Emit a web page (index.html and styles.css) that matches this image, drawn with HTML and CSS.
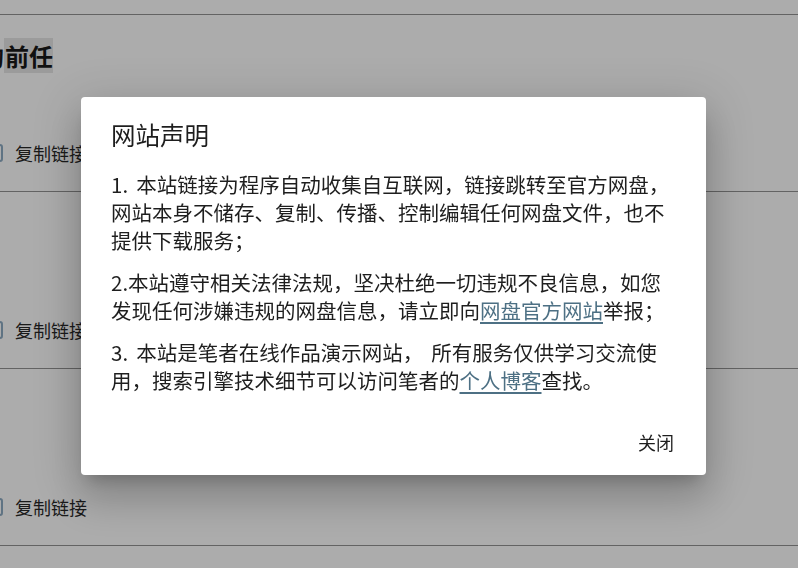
FILE: index.html
```html
<!DOCTYPE html>
<html lang="zh-CN">
<head>
<meta charset="utf-8">
<title>网站声明</title>
<link rel="stylesheet" href="styles.css">
</head>
<body>
<main class="list">
  <section class="row">
    <h2 class="row-title">的<span class="selected">前任</span></h2>
    <div class="copy">
      <svg class="copy-icon" width="18" height="18" viewBox="0 0 18 18"><rect x="1" y="1" width="16" height="16" rx="2" fill="none" stroke="#5f7383" stroke-width="2"/></svg>
      <span>复制链接</span>
    </div>
  </section>
  <section class="row row-end">
    <div class="copy">
      <svg class="copy-icon" width="18" height="18" viewBox="0 0 18 18"><rect x="1" y="1" width="16" height="16" rx="2" fill="none" stroke="#5f7383" stroke-width="2"/></svg>
      <span>复制链接</span>
    </div>
  </section>
  <section class="row row-end">
    <div class="copy">
      <svg class="copy-icon" width="18" height="18" viewBox="0 0 18 18"><rect x="1" y="1" width="16" height="16" rx="2" fill="none" stroke="#5f7383" stroke-width="2"/></svg>
      <span>复制链接</span>
    </div>
  </section>
  <section class="row row-last"></section>
</main>

<div class="overlay">
  <div class="dialog" role="dialog">
    <h1 class="dialog-title">网站声明</h1>
    <div class="dialog-body">
      <p>1. 本站链接为程序自动收集自互联网，链接跳转至官方网盘，网站本身不储存、复制、传播、控制编辑任何网盘文件，也不提供下载服务；</p>
      <p>2.本站遵守相关法律法规，坚决杜绝一切违规不良信息，如您发现任何涉嫌违规的网盘信息，请立即向<a href="#">网盘官方网站</a>举报；</p>
      <p>3. 本站是笔者在线作品演示网站， 所有服务仅供学习交流使用，搜索引擎技术细节可以访问笔者的<a href="#">个人博客</a>查找。</p>
    </div>
    <div class="dialog-actions">
      <button class="btn-close" type="button">关闭</button>
    </div>
  </div>
</div>
</body>
</html>
```
FILE: styles.css
```css
html, body {
  margin: 0;
  padding: 0;
  height: 100%;
}

body {
  background: #acacac;
  font-family: "Noto Sans CJK SC", "Noto Sans", sans-serif;
  color: #151515;
  overflow: hidden;
}

.list {
  padding-top: 14px;
}

.row {
  box-sizing: border-box;
  height: 177px;
  border-top: 1px solid #636363;
  padding: 26px 0 26px 0;
  display: flex;
  flex-direction: column;
  justify-content: space-between;
}

.row-end {
  justify-content: flex-end;
}

.row-last {
  height: 9px;
  padding: 0;
}

.row-title {
  margin: 0 0 0 -20px;
  font-size: 24px;
  line-height: 30px;
  font-weight: 700;
  color: #101010;
}

.selected {
  background: #9b9b9b;
  padding-left: 1px;
}

.copy {
  display: flex;
  align-items: center;
  gap: 12px;
  height: 24px;
  font-size: 18px;
  line-height: 24px;
  color: #1a1a1a;
}

.copy-icon {
  margin-left: -15px;
  flex: none;
}

.overlay {
  position: fixed;
  inset: 0;
  display: flex;
  align-items: center;
  justify-content: center;
  padding: 4px 11px 0 0;
}

.dialog {
  box-sizing: border-box;
  width: 625px;
  background: #fff;
  border-radius: 4px;
  padding: 22px 34px 15px 30px;
  box-shadow: 0 11px 15px -7px rgba(0, 0, 0, 0.2),
              0 24px 38px 3px rgba(0, 0, 0, 0.14),
              0 9px 46px 8px rgba(0, 0, 0, 0.12);
}

.dialog-title {
  margin: 0 0 19px 0;
  font-size: 24.5px;
  line-height: 32px;
  font-weight: 400;
  color: #1e1e1e;
}

.dialog-body p {
  margin: 0 0 14px 0;
  font-size: 20.5px;
  line-height: 28px;
  color: #1e1e1e;
  word-spacing: 3.5px;
}

.dialog-body p:last-child {
  margin-bottom: 0;
}

.dialog-body a {
  color: #4d7084;
  text-decoration: underline;
  text-underline-offset: 3px;
}

.dialog-actions {
  margin-top: 30px;
  display: flex;
  justify-content: flex-end;
}

.btn-close {
  height: 36px;
  margin-right: -10px;
  padding: 0 8px;
  border: none;
  background: none;
  font-family: inherit;
  font-size: 18px;
  color: #1e1e1e;
  cursor: pointer;
}
```
